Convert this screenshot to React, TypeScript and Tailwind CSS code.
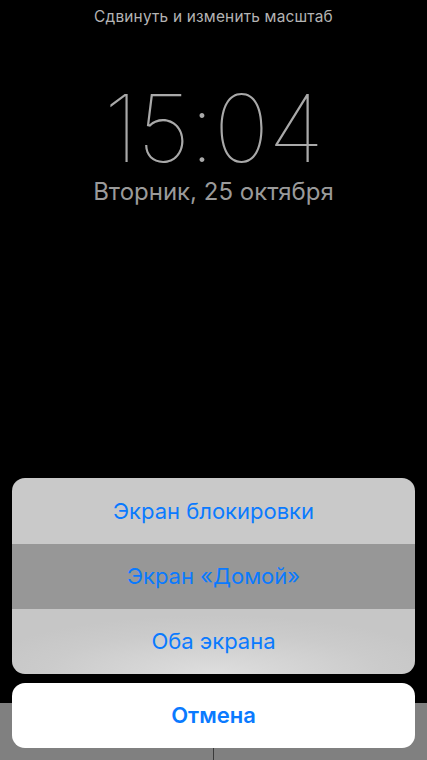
const font = { fontFamily: "Inter, 'Noto Sans', sans-serif" };

export default function App() {
  const options = [
    { label: "Экран блокировки", bg: "bg-[#c9c9c9]", h: "h-[66px]" },
    { label: "Экран «Домой»", bg: "bg-[#979797]", h: "h-[65px]" },
    { label: "Оба экрана", bg: "bg-[radial-gradient(ellipse_60%_90%_at_50%_100%,#dedede_0%,#cbcbcb_70%,#c6c6c6_100%)]", h: "h-[65px]" },
  ];

  return (
    <main className="relative h-[760px] w-full overflow-hidden bg-black flex flex-col" style={font}>
      {/* Lock screen preview */}
      <div className="flex flex-col items-center">
        <div className="mt-[7px] text-[15.4px] leading-[20px] text-[#b4b4b4] tracking-[0.2px]">
          Сдвинуть и изменить масштаб
        </div>
        <div className="mt-[55px] text-[94px] leading-[92px] font-thin text-[#a9a9a9] tracking-[-1px]">
          15:04
        </div>
        <div className="mt-[3px] text-[24px] leading-[30px] text-[#9a9a9a]">
          Вторник, 25 октября
        </div>
      </div>

      {/* Bottom bar behind sheet */}
      <div className="mt-auto h-[57px] bg-[#808080] grid grid-cols-2">
        <div className="border-r border-[#3a3a3a]" />
        <div />
      </div>

      {/* Action sheet */}
      <div className="absolute left-[12px] right-[12px] top-[478px] flex flex-col gap-[9px]">
        <div className="rounded-[13px] overflow-hidden flex flex-col">
          {options.map((o) => (
            <div
              key={o.label}
              className={`flex items-center justify-center text-[22px] text-[#0a7aff] ${o.h} ${o.bg}`}
            >
              {o.label}
            </div>
          ))}
        </div>
        <div className="h-[65px] rounded-[13px] bg-white flex items-center justify-center text-[22px] font-semibold text-[#0a7aff]">
          Отмена
        </div>
      </div>
    </main>
  );
}
